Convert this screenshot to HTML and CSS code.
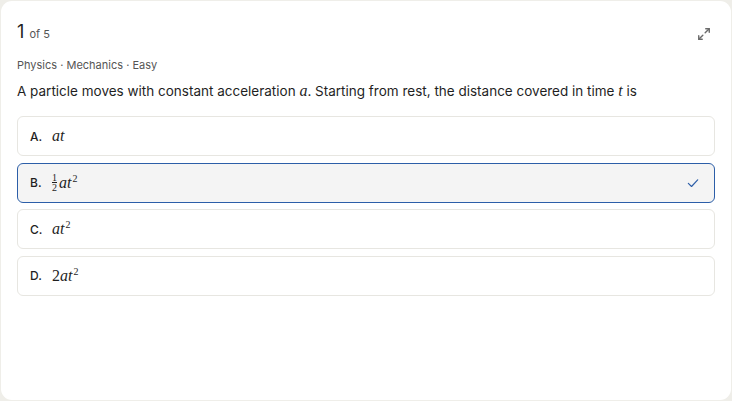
FILE: index.html
```html
<!DOCTYPE html>
<html lang="en">
<head>
<meta charset="UTF-8">
<meta name="viewport" content="width=device-width, initial-scale=1.0">
<title>Question</title>
<link rel="stylesheet" href="styles.css">
</head>
<body>
<div class="card">
  <div class="top">
    <div class="count"><span class="num">1</span> of 5</div>
    <button class="expand" aria-label="Expand">
      <svg width="14" height="14" viewBox="0 0 24 24" fill="none" stroke="currentColor" stroke-width="2.4" stroke-linecap="round" stroke-linejoin="round">
        <polyline points="15 3 21 3 21 9"/>
        <polyline points="9 21 3 21 3 15"/>
        <line x1="21" y1="3" x2="14" y2="10"/>
        <line x1="3" y1="21" x2="10" y2="14"/>
      </svg>
    </button>
  </div>
  <div class="meta">Physics · Mechanics · Easy</div>
  <p class="question">A particle moves with constant acceleration <i class="m">a</i>. Starting from rest, the distance covered in time <i class="m">t</i> is</p>
  <ul class="options">
    <li class="opt"><span class="key">A.</span><span class="math"><i>at</i></span></li>
    <li class="opt selected"><span class="key">B.</span><span class="math"><span class="frac"><span>1</span><span class="den">2</span></span><i>at</i><sup>2</sup></span>
      <svg class="check" width="14" height="14" viewBox="0 0 24 24" fill="none" stroke="currentColor" stroke-width="2" stroke-linecap="round" stroke-linejoin="round"><polyline points="4 12.5 9.5 18 20 6.5"/></svg>
    </li>
    <li class="opt"><span class="key">C.</span><span class="math"><i>at</i><sup>2</sup></span></li>
    <li class="opt"><span class="key">D.</span><span class="math">2<i>at</i><sup>2</sup></span></li>
  </ul>
</div>
</body>
</html>
```

FILE: styles.css
```css
html, body {
  height: 100%;
  margin: 0;
}
body {
  background: #efeee9;
  font-family: Inter, "Noto Sans", sans-serif;
  color: #1f1f1f;
}
.card {
  box-sizing: border-box;
  height: calc(100% - 2px);
  margin: 1px;
  padding: 18px 16px 16px 16px;
  background: #fff;
  border-radius: 11px;
}
.top {
  display: flex;
  justify-content: space-between;
  align-items: center;
  height: 24px;
}
.count {
  font-size: 11px;
  color: #555;
}
.num {
  font-size: 18px;
  color: #1f1f1f;
  margin-right: 2px;
}
.expand {
  border: 0;
  background: none;
  padding: 0;
  margin-right: 4px;
  margin-top: 6px;
  color: #6b6b6b;
  display: flex;
}
.meta {
  margin-top: 15px;
  font-size: 11px;
  color: #555;
}
.question {
  margin: 9px 0 0;
  font-size: 13.5px;
  line-height: 20px;
}
.m, .math {
  font-family: "Liberation Serif", "DejaVu Serif", serif;
  font-size: 16px;
}
.options {
  list-style: none;
  margin: 15px 0 0;
  padding: 0;
  display: flex;
  flex-direction: column;
  gap: 6.6px;
}
.opt {
  display: flex;
  align-items: center;
  height: 38px;
  padding: 0 12px;
  border: 1px solid #e7e6e1;
  border-radius: 6px;
}
.opt.selected {
  border-color: #2c5ea8;
  background: #f4f4f4;
}
.key {
  width: 22px;
  font-size: 12px;
  font-weight: 500;
  color: #1f1f1f;
}
.math {
  line-height: 1;
}
.math sup {
  font-size: 10px;
  line-height: 0;
  vertical-align: 6px;
  margin-left: 1px;
}
.frac {
  display: inline-flex;
  flex-direction: column;
  align-items: center;
  font-size: 10px;
  line-height: 8px;
  vertical-align: 7px;
  margin-right: 2px;
}
.frac .den {
  border-top: 1px solid #1f1f1f;
  padding-top: 1px;
}
.check {
  margin-left: auto;
  margin-right: 2px;
  color: #2c5ea8;
}
```
